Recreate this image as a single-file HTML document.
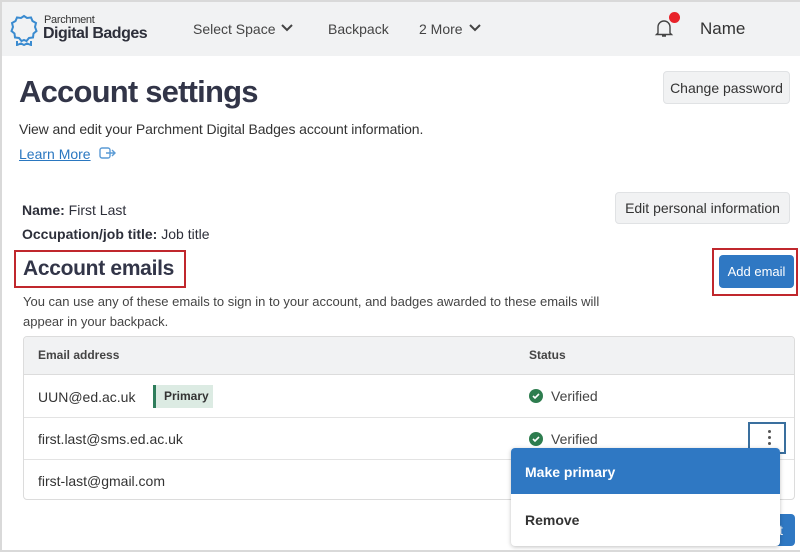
<!DOCTYPE html>
<html><head><meta charset="utf-8"><style>
*{box-sizing:border-box;margin:0;padding:0}
body{width:800px;height:552px;overflow:hidden;background:#fff;font-family:"Liberation Sans",sans-serif;color:#2d2f3a;position:relative}
.a{position:absolute;white-space:nowrap}
.frame{position:absolute;left:0;top:0;width:800px;height:552px;border:2px solid #d9d9d9;border-right:none;pointer-events:none}
.hdr{position:absolute;left:0;top:0;width:800px;height:56px;background:#f1f2f3}
.btn{position:absolute;background:#f1f2f3;border:1px solid #e0e2e4;border-radius:4px;font-size:14px;color:#333;display:flex;align-items:center;justify-content:center}
</style></head><body>
<div class="hdr"></div>
<svg class="a" style="left:10px;top:14px" width="28" height="32" viewBox="0 0 28 32"><path d="M14 2 L17 4 L21 3.5 L22.5 7 L26 9 L25 13 L26.5 17 L23.5 19.5 L23 23.5 L19 24 L16.5 27 L14 26 L11.5 27 L9 24 L5 23.5 L4.5 19.5 L1.5 17 L3 13 L2 9 L5.5 7 L7 3.5 L11 4 Z" fill="none" stroke="#3a8bd0" stroke-width="2"/><path d="M7 27 L7 31 L11 29.5 L14 31 L17 29.5 L21 31 L21 27" fill="none" stroke="#3a8bd0" stroke-width="2"/></svg>
<div class="a" style="left:44px;top:14px;font-size:11px;color:#333;letter-spacing:-0.3px">Parchment</div>
<div class="a" style="left:43px;top:25px;font-size:16px;color:#2d2f3a;font-weight:bold;letter-spacing:-0.5px">Digital Badges</div>
<div class="a" style="left:193px;top:21px;font-size:14px;color:#444">Select Space</div>
<svg class="a" style="left:281px;top:24px" width="12" height="9"><path d="M1 1 L6 6 L11 1" fill="none" stroke="#444" stroke-width="2"/></svg>
<div class="a" style="left:328px;top:21px;font-size:14px;color:#444">Backpack</div>
<div class="a" style="left:419px;top:21px;font-size:14px;color:#444">2 More</div>
<svg class="a" style="left:469px;top:24px" width="12" height="9"><path d="M1 1 L6 6 L11 1" fill="none" stroke="#444" stroke-width="2"/></svg>
<svg class="a" style="left:654px;top:18px" width="20" height="20" viewBox="0 0 20 20"><path d="M4 15 L4 9 A6 6 0 0 1 16 9 L16 15 L17.5 16.5 L2.5 16.5 Z M8 18 L12 18" fill="none" stroke="#444" stroke-width="1.4"/></svg>
<div class="a" style="left:669px;top:12px;width:11px;height:11px;border-radius:50%;background:#e8232a"></div>
<div class="a" style="left:700px;top:19px;font-size:17px;color:#333">Name</div>

<div class="a" style="left:19px;top:74px;font-size:31px;font-weight:bold;color:#323548;letter-spacing:-0.8px">Account settings</div>
<div class="a" style="left:19px;top:121px;font-size:14px;color:#333;letter-spacing:-0.1px">View and edit your Parchment Digital Badges account information.</div>
<div class="a" style="left:19px;top:146px;font-size:14px;color:#2a77c0;text-decoration:underline">Learn More</div>
<svg class="a" style="left:99px;top:146px" width="18" height="14" viewBox="0 0 18 14"><rect x="1" y="2" width="10" height="10" rx="2" fill="none" stroke="#5b9bd5" stroke-width="1.4"/><path d="M7 7 L16 7 M13 4 L16 7 L13 10" fill="none" stroke="#5b9bd5" stroke-width="1.4"/></svg>
<div class="btn" style="left:663px;top:71px;width:127px;height:33px">Change password</div>

<div class="a" style="left:22px;top:202px;font-size:14px"><b>Name:</b> First Last</div>
<div class="a" style="left:22px;top:226px;font-size:14px"><b>Occupation/job title:</b> Job title</div>
<div class="btn" style="left:615px;top:192px;width:175px;height:32px">Edit personal information</div>

<div class="a" style="left:14px;top:250px;width:172px;height:38px;border:2px solid #c0272d"></div>
<div class="a" style="left:23px;top:257px;font-size:21px;font-weight:bold;color:#323548;letter-spacing:-0.3px">Account emails</div>
<div class="a" style="left:712px;top:248px;width:86px;height:48px;border:2px solid #c0272d"></div>
<div class="a" style="left:719px;top:255px;width:75px;height:33px;background:#2f78c3;border-radius:4px;color:#fff;font-size:13px;display:flex;align-items:center;justify-content:center">Add email</div>
<div class="a" style="left:23px;top:292px;font-size:13px;color:#444;line-height:20px">You can use any of these emails to sign in to your account, and badges awarded to these emails will<br>appear in your backpack.</div>

<div class="a" style="left:23px;top:336px;width:772px;height:164px;border:1px solid #dcdcdc;border-radius:4px;overflow:hidden">
<div style="height:38px;background:#f1f2f3;border-bottom:1px solid #dcdcdc"></div>
<div style="height:43px;border-bottom:1px solid #e3e3e3"></div>
<div style="height:42px;border-bottom:1px solid #e3e3e3"></div>
</div>
<div class="a" style="left:38px;top:348px;font-size:12px;font-weight:bold;color:#444">Email address</div>
<div class="a" style="left:529px;top:348px;font-size:12px;font-weight:bold;color:#444">Status</div>
<div class="a" style="left:38px;top:389px;font-size:14px;color:#333">UUN@ed.ac.uk</div>
<div class="a" style="left:153px;top:385px;width:60px;height:23px;background:#dcebe3;border-left:3px solid #2e7d5b;font-size:12px;font-weight:bold;color:#333;padding:4px 0 0 8px">Primary</div>
<div class="a" style="left:38px;top:431px;font-size:14px;color:#333">first.last@sms.ed.ac.uk</div>
<div class="a" style="left:38px;top:473px;font-size:14px;color:#333">first-last@gmail.com</div>
<svg class="a" style="left:529px;top:389px" width="14" height="14"><circle cx="7" cy="7" r="7" fill="#2e7d4f"/><path d="M4 7 L6 9 L10 5" fill="none" stroke="#fff" stroke-width="1.6"/></svg>
<div class="a" style="left:551px;top:388px;font-size:14px;color:#444">Verified</div>
<svg class="a" style="left:529px;top:432px" width="14" height="14"><circle cx="7" cy="7" r="7" fill="#2e7d4f"/><path d="M4 7 L6 9 L10 5" fill="none" stroke="#fff" stroke-width="1.6"/></svg>
<div class="a" style="left:551px;top:431px;font-size:14px;color:#444">Verified</div>
<div class="a" style="left:748px;top:422px;width:38px;height:32px;border:2px solid #3a6f9e;background:#fff"></div>
<div class="a" style="left:768px;top:430px;width:3px;height:3px;border-radius:50%;background:#555;box-shadow:0 6px 0 #555,0 12px 0 #555"></div>
<div class="a" style="left:757px;top:514px;width:38px;height:32px;background:#2f78c3;border-radius:4px;color:#fff;font-size:14px;padding:8px 0 0 22px">t</div>

<div class="a" style="left:511px;top:448px;width:269px;height:98px;background:#fff;border-radius:4px;box-shadow:0 1px 4px rgba(0,0,0,0.25);overflow:hidden">
<div style="height:46px;background:#2f78c3;color:#fff;font-size:14px;font-weight:bold;padding:16px 0 0 14px">Make primary</div>
<div style="font-size:14px;font-weight:bold;color:#333;padding:18px 0 0 14px">Remove</div>
</div>
<div class="frame"></div>
</body></html>
